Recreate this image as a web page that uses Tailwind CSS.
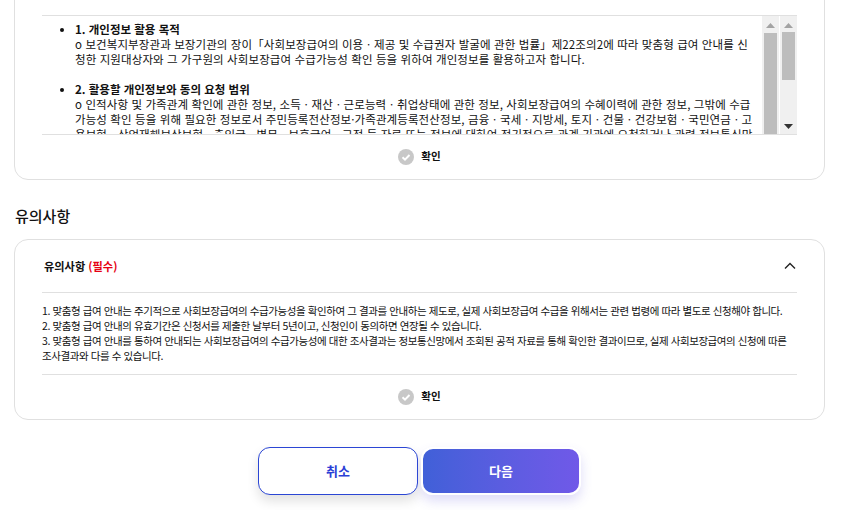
<!DOCTYPE html>
<html lang="ko">
  <head>
    <meta charset="UTF-8" />
    <meta name="viewport" content="width=device-width, initial-scale=1.0" />
    <script src="https://cdn.jsdelivr.net/npm/@tailwindcss/browser@4"></script>
    <title>맞춤형 급여 안내 신청</title>
  </head>
  <body class="h-[510px] overflow-hidden bg-white font-['Noto_Sans_CJK_KR','Noto_Sans',sans-serif] text-[#111]">
    <main class="-mt-[40px] flex flex-col pl-[14px] pr-[22px]">
      <!-- 개인정보 카드 -->
      <section class="h-[220px] rounded-[14px] border border-[#e0e0e0] px-[27px] pt-[54px]">
        <div class="flex h-[120px] overflow-hidden border-y border-[#e0e0e0]">
          <ul class="min-w-0 flex-1 whitespace-nowrap pl-[33px] pt-[6px] text-[11.5px] leading-[15px]">
            <li class="relative">
              <span class="absolute -left-[15px] top-[6px] h-[4px] w-[4px] rounded-full bg-[#111]"></span>
              <p class="font-bold">1. 개인정보 활용 목적</p>
              <p class="tracking-[0.1px]">o 보건복지부장관과 보장기관의 장이「사회보장급여의 이용ㆍ제공 및 수급권자 발굴에 관한 법률」제22조의2에 따라 맞춤형 급여 안내를 신<br />청한 지원대상자와 그 가구원의 사회보장급여 수급가능성 확인 등을 위하여 개인정보를 활용하고자 합니다.</p>
            </li>
            <li class="relative mt-[15px]">
              <span class="absolute -left-[15px] top-[6px] h-[4px] w-[4px] rounded-full bg-[#111]"></span>
              <p class="font-bold">2. 활용할 개인정보와 동의 요청 범위</p>
              <p class="tracking-[0.1px]">o 인적사항 및 가족관계 확인에 관한 정보, 소득ㆍ재산ㆍ근로능력ㆍ취업상태에 관한 정보, 사회보장급여의 수혜이력에 관한 정보, 그밖에 수급<br />가능성 확인 등을 위해 필요한 정보로서 주민등록전산정보·가족관계등록전산정보, 금융ㆍ국세ㆍ지방세, 토지ㆍ건물ㆍ건강보험ㆍ국민연금ㆍ고<br />용보험ㆍ산업재해보상보험ㆍ출입국ㆍ병무ㆍ보훈급여ㆍ교정 등 자료 또는 정보에 대하여 정기적으로 관계 기관에 요청하거나 관련 정보통신망</p>
            </li>
          </ul>
          <!-- 안쪽 스크롤바 -->
          <div class="flex w-[17px] shrink-0 flex-col items-center bg-[#f0f0f0]">
            <svg class="mt-[7px] shrink-0" width="9" height="5" viewBox="0 0 9 5"><path d="M4.5 0 9 5H0z" fill="#a3a3a3" /></svg>
            <div class="mt-[5px] h-[110px] w-[13px] shrink-0 bg-[#bdbdbd]"></div>
          </div>
          <!-- 바깥 스크롤바 -->
          <div class="ml-px flex w-[17px] shrink-0 flex-col items-center bg-[#f0f0f0]">
            <svg class="mt-[7px] shrink-0" width="9" height="5" viewBox="0 0 9 5"><path d="M4.5 0 9 5H0z" fill="#a3a3a3" /></svg>
            <div class="mt-[4px] h-[48px] w-[13px] shrink-0 bg-[#bdbdbd]"></div>
            <svg class="mt-[44px] shrink-0" width="9" height="5" viewBox="0 0 9 5"><path d="M0 0h9L4.5 5z" fill="#333" /></svg>
          </div>
        </div>
        <div class="flex h-[44px] items-center justify-center gap-[7px] text-[10.5px] font-bold">
          <svg width="16" height="16" viewBox="0 0 16 16"><circle cx="8" cy="8" r="8" fill="#c8c8c8" /><path d="m4.500 8.200 2.500 2.400 4.500-4.600" fill="none" stroke="#fff" stroke-width="2" /></svg>
          <span class="-translate-y-px">확인</span>
        </div>
      </section>

      <h2 class="mt-[24px] h-[35px] pl-px text-[15px] leading-[24px] font-medium">유의사항</h2>

      <!-- 유의사항 카드 -->
      <section class="h-[181px] rounded-[14px] border border-[#e0e0e0] px-[27px]">
        <div class="flex h-[53px] items-center justify-between border-b border-[#e0e0e0] pl-[2px] pr-[1px]">
          <h3 class="text-[11.2px] font-bold">유의사항 <span class="text-[#e60012]">(필수)</span></h3>
          <svg width="12" height="12" viewBox="0 0 12 12"><path d="M1 8.500 6 3.500l5 5" fill="none" stroke="#222" stroke-width="1.400" /></svg>
        </div>
        <div class="h-[82px] border-b border-[#e0e0e0] pt-[10px] text-[10.5px] leading-[15px] tracking-[-0.42px]">
          <p>1. 맞춤형 급여 안내는 주기적으로 사회보장급여의 수급가능성을 확인하여 그 결과를 안내하는 제도로, 실제 사회보장급여 수급을 위해서는 관련 법령에 따라 별도로 신청해야 합니다.</p>
          <p>2. 맞춤형 급여 안내의 유효기간은 신청서를 제출한 날부터 5년이고, 신청인이 동의하면 연장될 수 있습니다.</p>
          <p>3. 맞춤형 급여 안내를 통하여 안내되는 사회보장급여의 수급가능성에 대한 조사결과는 정보통신망에서 조회된 공적 자료를 통해 확인한 결과이므로, 실제 사회보장급여의 신청에 따른 조사결과와 다를 수 있습니다.</p>
        </div>
        <div class="flex h-[44px] items-center justify-center gap-[7px] text-[10.5px] font-bold">
          <svg width="16" height="16" viewBox="0 0 16 16"><circle cx="8" cy="8" r="8" fill="#c8c8c8" /><path d="m4.500 8.200 2.500 2.400 4.500-4.600" fill="none" stroke="#fff" stroke-width="2" /></svg>
          <span class="-translate-y-px">확인</span>
        </div>
      </section>

      <!-- 하단 버튼 -->
      <div class="mt-[27px] flex items-center justify-center gap-[3px]">
        <button class="h-[48px] w-[160px] rounded-[12px] border border-[#2b46d4] bg-white text-[13px] font-bold text-[#2b3fd6] shadow-[0_6px_12px_rgba(0,0,0,0.12)]">취소</button>
        <button class="h-[48px] w-[160px] rounded-[12px] border-2 border-white bg-linear-to-r from-[#4060d8] to-[#7059e8] text-[13px] font-bold text-white shadow-[0_6px_12px_rgba(90,80,220,0.2)]">다음</button>
      </div>
    </main>
  </body>
</html>
